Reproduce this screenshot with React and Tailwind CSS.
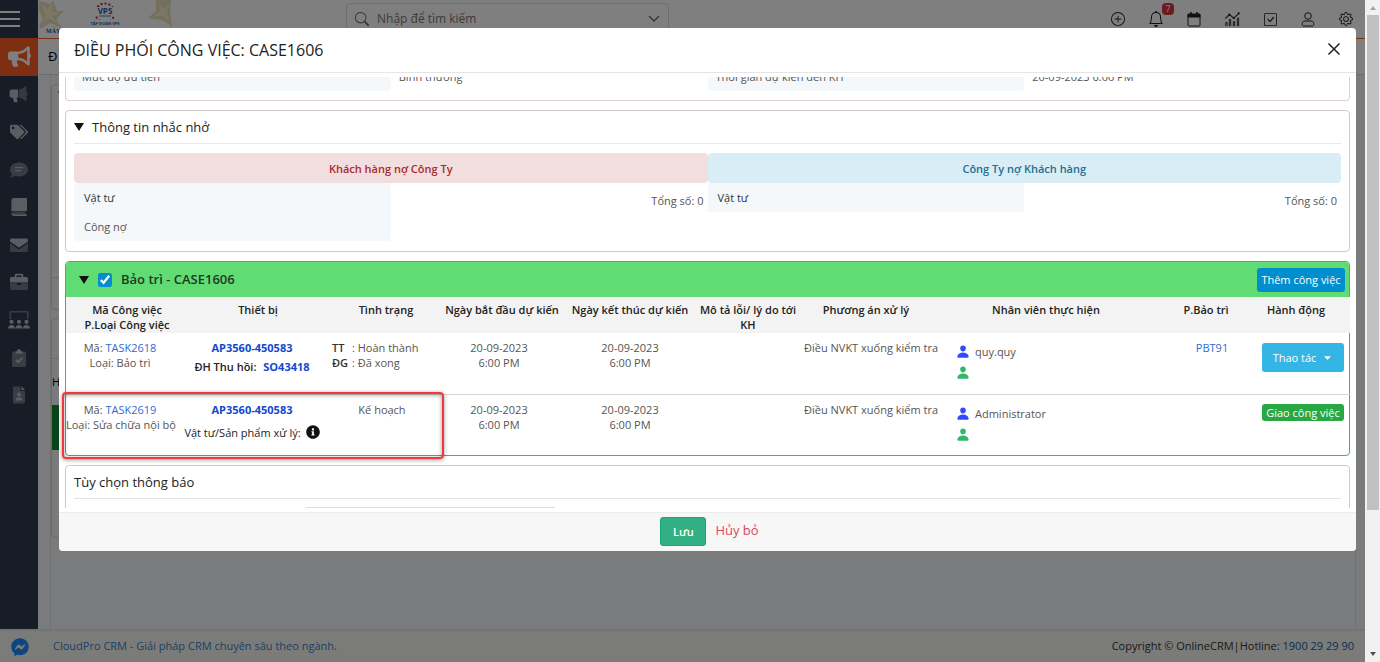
import React from 'react';
import { BsPlusCircle, BsBell, BsCheckSquare, BsGear, BsSearch } from 'react-icons/bs';
import { FaBullhorn, FaTags, FaInfoCircle, FaCaretDown, FaFacebookMessenger } from 'react-icons/fa';
import { IoPerson } from 'react-icons/io5';

/* ---------- Sidebar icons (two-tone) ---------- */
const Megaphone = () => (
    <svg viewBox="0 0 20 18" className="w-5 h-[18px]" fill="currentColor">
        <path d="M2.5 4.500H9v8.200H7.600l.9 3.600c.1.500-.2.900-.7.900H5.600c-.4 0-.7-.2-.8-.6l-1-3.900H2.500C1.400 12.700.6 11.900.6 10.800V6.400c0-1.100.8-1.900 1.900-1.900z" />
        <path opacity=".45" d="M9.800 4.500c2.500-.2 4.700-1.400 6.600-3.200.4-.4 1.100-.1 1.100.5v4.900c1.600.7 1.600 3.200 0 3.900v4.700c0 .6-.7.9-1.100.5-1.900-1.800-4.100-2.900-6.600-3.100z" />
    </svg>
);

const CommentLines = () => (
    <svg viewBox="0 0 20 18" className="w-5 h-[18px]" fill="currentColor">
        <path opacity=".5" d="M10 1.500c5 0 9 3.100 9 7s-4 7-9 7c-1.400 0-2.700-.2-3.900-.7-1.200.9-3 1.700-5.100 1.700 1-1 1.800-2.200 2-3.400C1.700 11.800 1 10.200 1 8.500c0-3.900 4-7 9-7z" />
        <path d="M6 6h8v1.300H6zM6 9h6v1.300H6z" />
    </svg>
);

const Book = () => (
    <svg viewBox="0 0 18 20" className="w-[18px] h-5" fill="currentColor">
        <path d="M4 1h12c.600 0 1 .4 1 1v11c0 .6-.4 1-1 1H4c-1.200 0-2 .4-2.600 1V3.600C1.400 2.100 2.500 1 4 1z" />
        <path opacity=".5" d="M4 14.500h11.500V17H4c-1.600 0-1.600-2.500 0-2.500z" />
        <path d="M1.400 15.800c0 1.900 1.100 3.200 2.600 3.200h12c.6 0 1-.4 1-.9s-.4-.9-1-.9H4c-.9 0-1.500-.6-1.500-1.400z" />
    </svg>
);

const Mail = () => (
    <svg viewBox="0 0 20 18" className="w-5 h-[18px]" fill="currentColor">
        <path opacity=".5" d="M1 7l7.400 5.400c1 .7 2.200.7 3.200 0L19 7v7.300c0 .9-.7 1.700-1.700 1.700H2.700C1.700 16 1 15.200 1 14.300z" />
        <path d="M2.700 2.500h14.600c1 0 1.700.7 1.700 1.600v1.300l-8 5.700c-.6.5-1.400.5-2 0L1 5.400V4.100c0-.9.700-1.600 1.700-1.600z" />
    </svg>
);

const Briefcase = () => (
    <svg viewBox="0 0 20 18" className="w-5 h-[18px]" fill="currentColor">
        <path d="M7.200.8h5.600c.8 0 1.500.7 1.500 1.500V4h3c1 0 1.700.7 1.700 1.700v3.800H1V5.700C1 4.700 1.700 4 2.700 4h3V2.300c0-.8.7-1.500 1.500-1.500zm.3 1.800V4h5V2.600z" />
        <path opacity=".5" d="M1 10.300h7v1.200c0 .3.300.6.6.6h2.800c.3 0 .6-.3.6-.6v-1.200h7v5c0 1-.7 1.700-1.700 1.700H2.700C1.700 17 1 16.300 1 15.300z" />
    </svg>
);

const ScreenUsers = () => (
    <svg viewBox="0 0 24 20" className="w-6 h-5" fill="currentColor">
        <path opacity=".5" d="M2.500 9V2c0-.6.500-1 1-1h17c.5 0 1 .4 1 1v7h-1.500V2.500H4V9z" />
        <circle cx="4.500" cy="11.800" r="2.100" />
        <circle cx="12" cy="11.800" r="2.100" />
        <circle cx="19.500" cy="11.800" r="2.100" />
        <path d="M1 18.500c0-2.200 1.400-3.600 3.500-3.600S8 16.300 8 18.500zM8.500 18.500c0-2.200 1.400-3.600 3.500-3.600s3.500 1.400 3.500 3.600zM16 18.500c0-2.200 1.400-3.600 3.500-3.600s3.500 1.400 3.500 3.600z" />
    </svg>
);

const Clipboard = () => (
    <svg viewBox="0 0 16 20" className="w-4 h-5">
        <path fill="currentColor" opacity=".5" d="M2.500 3.500h11c.8 0 1.500.7 1.500 1.500v12.500c0 .8-.7 1.500-1.500 1.500h-11c-.8 0-1.500-.7-1.500-1.500V5c0-.8.7-1.500 1.500-1.500z" />
        <path fill="currentColor" d="M4.500 3.500h1.300a2.200 2.200 0 0 1 4.400 0h1.300v2.300h-7z" />
        <path fill="none" stroke="currentColor" strokeWidth="1.800" d="M4.800 12l2.300 2.200 4.200-4.200" />
    </svg>
);

const FileUser = () => (
    <svg viewBox="0 0 16 20" className="w-4 h-5" fill="currentColor">
        <path opacity=".5" d="M3 1.500h6.500V6H14v11c0 .8-.7 1.500-1.500 1.500H3.500c-.8 0-1.500-.7-1.500-1.500V2.500c0-.6.400-1 1-1z" />
        <path d="M10.500 1.500L14 5h-3.500z" />
        <circle cx="8" cy="9.500" r="2" />
        <path d="M4.500 15.500c0-2 1.300-3.200 3.500-3.200s3.500 1.200 3.500 3.200z" />
    </svg>
);

const MENU = [
    { name: 'Chiến dịch', icon: Megaphone },
    { name: 'Thẻ', icon: FaTags },
    { name: 'Bình luận', icon: CommentLines },
    { name: 'Tài liệu', icon: Book },
    { name: 'Email', icon: Mail },
    { name: 'Công việc', icon: Briefcase },
    { name: 'Cuộc họp', icon: ScreenUsers },
    { name: 'Kiểm tra', icon: Clipboard },
    { name: 'Hồ sơ', icon: FileUser },
];

/* ---------- Header icons ---------- */
const CalendarIcon = () => (
    <svg viewBox="0 0 16 16" className="w-4 h-4" fill="none" stroke="currentColor">
        <rect x="2" y="3.500" width="12" height="11.500" rx="1" />
        <path d="M2 3h12v3H2z" fill="currentColor" />
        <path d="M5 1v3M11 1v3" strokeWidth="1.500" />
    </svg>
);

const ChartIcon = () => (
    <svg viewBox="0 0 18 18" className="w-4 h-4" fill="none" stroke="currentColor">
        <path d="M1.500 8.500L6 4l5 4 5.500-5" strokeWidth="1.300" />
        <path d="M2 17v-4h1.500v4M6 17V9.500h1.500V17M10.500 17v-5H12v5M15 17V8h1.500v9" />
        <circle cx="6" cy="4" r=".8" fill="currentColor" />
        <circle cx="11" cy="8" r=".8" fill="currentColor" />
        <circle cx="16.500" cy="2.500" r=".8" fill="currentColor" />
    </svg>
);

const UserIcon = () => (
    <svg viewBox="0 0 16 16" className="w-4 h-4" fill="none" stroke="currentColor">
        <circle cx="8" cy="5" r="3.300" />
        <path d="M5 10h6c1.700 0 2.800 1.200 2.800 2.700S13.200 15 12.300 15H3.700c-.9 0-1.500-.8-1.500-2.300S3.300 10 5 10z" />
    </svg>
);

const Banner = () => (
    <svg viewBox="0 0 140 38" className="w-[140px] h-[38px] shrink-0" aria-hidden="true">
        <path fill="#e6deb8" d="M1 1l11 3 3-4 4 11 7 0-8 8 6 9-12-5-9 6-2-3 4-7-4-8z" />
        <path fill="#f6efcf" d="M2 3l8 5 5-6-1 10 10 1-10 3 6 8-9-6-8 7 5-10z" />
        <path fill="#e6deb8" d="M118 0h15l-1 11 2 15-10-6-14-2 8-7z" />
        <path fill="#f6efcf" d="M120 1l5 8 6-5-2 8 3 10-8-6-10 1 8-6z" />
        <circle cx="67" cy="13" r="9.500" fill="none" stroke="#c8233b" strokeWidth="2" strokeDasharray="2 2" />
        <path fill="#fff" d="M55 7h24v9H55z" />
        <text x="67" y="14" textAnchor="middle" fontSize="8" fontWeight="700" fill="#1f62a8">VPS</text>
        <path d="M61 16h12" stroke="#4f87bd" />
        <path fill="#fff" d="M55 20h24v6H55z" />
        <text x="67" y="25" textAnchor="middle" fontSize="4" fontWeight="700" fill="#1f62a8">TẬP ĐOÀN VPS</text>
        <text x="8" y="33" fontSize="6" fontWeight="700" fontFamily="Liberation Serif, serif" fill="#1f4fa0">MÁY</text>
    </svg>
);

const Chevron = () => (
    <svg viewBox="0 0 12 8" className="w-3 h-2" fill="none" stroke="currentColor" strokeWidth="1.300">
        <path d="M1 1l5 5 5-5" />
    </svg>
);

const Triangle = () => (
    <svg viewBox="0 0 10 8" className="w-[10px] h-2 shrink-0" fill="#111">
        <path d="M0 0h10L5 8z" />
    </svg>
);

/* ---------- Page behind the modal ---------- */
const Page = () => (
    <div className="flex flex-col h-full">
        <div className="flex flex-1 min-h-0">
            <aside className="w-[38px] shrink-0 bg-[#2c3b4c]">
                <button aria-label="Menu" className="flex flex-col justify-center gap-[5px] w-5 h-[38px]">
                    <span className="h-[2px] w-full bg-white"></span>
                    <span className="h-[2px] w-full bg-white"></span>
                    <span className="h-[2px] w-full bg-white"></span>
                </button>
                <nav className="flex flex-col h-[376px] text-lg text-[#b4bac2]">
                    <a href="#marketing" aria-label="Marketing" className="flex flex-1 items-center justify-center bg-[#fe5f22] text-white text-[23px]">
                        <FaBullhorn />
                    </a>
                    {MENU.map((item) => (
                        <a key={item.name} href="#menu" aria-label={item.name} className="flex flex-1 items-center justify-center">
                            <item.icon />
                        </a>
                    ))}
                </nav>
            </aside>

            <div className="flex-1 min-w-0 flex flex-col bg-[#f5f7fa]">
                <header className="h-[39px] flex bg-white border-b border-[#fe5f22]">
                    <Banner />
                    <div className="flex-1 flex">
                        <div className="ml-[168px] mt-[3px] w-[323px] h-8 flex items-center gap-2 px-2 rounded border border-[#dcdcdc] text-[#666]">
                            <BsSearch className="w-[14px] h-[14px]" />
                            <input aria-label="Tìm kiếm" placeholder="Nhập để tìm kiếm" className="flex-1 min-w-0 text-xs bg-transparent placeholder:text-[#777]" />
                            <Chevron />
                        </div>
                    </div>
                    <div className="flex items-center gap-[22px] pr-[11px] text-base text-[#222]">
                        <button aria-label="Thêm" className="w-4 flex justify-center"><BsPlusCircle className="w-[14px] h-[14px]" /></button>
                        <button aria-label="Thông báo" className="relative">
                            <BsBell />
                            <span className="absolute -top-2 left-[14px] w-3 h-3 rounded-sm bg-[#dc3545] text-white text-[9px] leading-3 text-center">7</span>
                        </button>
                        <button aria-label="Lịch"><CalendarIcon /></button>
                        <button aria-label="Báo cáo"><ChartIcon /></button>
                        <button aria-label="Công việc" className="w-4 flex justify-center"><BsCheckSquare className="w-[13px] h-[13px]" /></button>
                        <button aria-label="Tài khoản"><UserIcon /></button>
                        <button aria-label="Cài đặt" className="w-4 flex justify-center"><BsGear className="w-[14px] h-[14px]" /></button>
                    </div>
                </header>
                <div className="h-9 flex items-center px-[10px] bg-white border-b border-[#ddd] text-[13px] font-medium">Đ</div>
                <div className="flex-1 flex flex-col gap-2 ml-3 mr-[9px] pt-[9px] border-x border-[#e4e4e4]">
                    <div className="h-[226px] flex flex-col rounded border border-[#d5d5d5] px-[6px]">
                        <span className="flex-1 text-[#b00020] text-xs">▾</span>
                        <div className="h-8 -mx-[6px] border-t border-[#d5d5d5]"></div>
                    </div>
                    <div className="h-[220px] flex flex-col rounded border border-[#d5d5d5]">
                        <div className="h-10 border-b border-[#ddd]"></div>
                        <div className="h-[46px] flex items-center text-[11px]">H</div>
                        <div className="h-[45px] bg-[#0f8a2c]"></div>
                    </div>
                </div>
            </div>
        </div>

        <footer className="h-[33px] shrink-0 flex items-center justify-between border-t-2 border-[#e6e8e8] bg-[#f6f8f5] px-[11px] text-[11px] text-[#333]">
            <div className="flex items-center gap-6">
                <FaFacebookMessenger className="w-[18px] h-[18px] text-[#1a8cff]" />
                <a href="#cloudpro" className="text-[#3b7fc0]">CloudPro CRM - Giải pháp CRM chuyên sâu theo ngành.</a>
            </div>
            <p>
                Copyright © OnlineCRM|Hotline: <a href="tel:1900292990" className="text-[#0f5ca8]">1900 29 29 90</a>
            </p>
        </footer>
    </div>
);

/* ---------- Modal parts ---------- */
const Field = ({ label, value }) => (
    <div className="grid grid-cols-2 h-[29px] items-center">
        <span className="h-full flex items-center pl-2 rounded-b bg-[#f4f8fb]">{label}</span>
        <span className="pl-2">{value}</span>
    </div>
);

const COLUMNS = [
    { title: 'Mã Công việc', sub: 'P.Loại Công việc', width: 'w-[108px]', pad: 'pl-[14px]' },
    { title: 'Thiết bị', width: 'w-[156px]', pad: 'pl-3' },
    { title: 'Tình trạng', width: 'w-[104px]', pad: 'pl-2' },
    { title: 'Ngày bắt đầu dự kiến', width: 'w-[130px]', pad: 'pl-[6px]' },
    { title: 'Ngày kết thúc dự kiến', width: 'w-[132px]', pad: '' },
    { title: 'Mô tả lỗi/ lý do tới', sub: 'KH', width: 'w-[108px]', pad: 'pr-1' },
    { title: 'Phương án xử lý', width: 'w-[128px]', pad: 'pr-1' },
    { title: 'Nhân viên thực hiện', width: 'w-[236px]', pad: 'pr-2' },
    { title: 'P.Bảo trì', width: 'w-[88px]', pad: 'pr-3' },
    { title: 'Hành động', width: 'w-[94px]', pad: 'pr-[14px]' },
];

const TASKS = [
    { code: 'TASK2618', type: 'Bảo trì', device: 'AP3560-450583', order: 'SO43418', user: 'quy.quy', ticket: 'PBT91', done: true },
    { code: 'TASK2619', type: 'Sửa chữa nội bộ', device: 'AP3560-450583', user: 'Administrator' },
];

const TaskRow = ({ task }) => (
    <tr className="h-[61px] align-top border-b border-[#ddd3d6] last:border-b-0 whitespace-nowrap [&>td]:pt-[7px]">
        <td>
            Mã: <a href="#task" className="text-[#3567d6]">{task.code}</a>
            <br />
            Loại: {task.type}
        </td>
        <td className="text-[#222]">
            <a href="#device" className="font-bold text-[#1148d0]">{task.device}</a>
            {task.order ? (
                <p className="mt-1 font-semibold">
                    ĐH Thu hồi: <a href="#order" className="ml-1 font-bold text-[#1148d0]">{task.order}</a>
                </p>
            ) : (
                <p className="mt-2 flex items-center justify-center gap-[5px]">
                    Vật tư/Sản phẩm xử lý: <FaInfoCircle className="w-[14px] h-[14px] text-[#111]" />
                </p>
            )}
        </td>
        <td>
            {task.done ? (
                <div className="grid grid-cols-[20px_1fr] pl-[2px] text-left">
                    <span className="font-semibold text-[#333]">TT</span><span>: Hoàn thành</span>
                    <span className="font-semibold text-[#333]">ĐG</span><span>: Đã xong</span>
                </div>
            ) : 'Kế hoạch'}
        </td>
        <td>20-09-2023<br />6:00 PM</td>
        <td>20-09-2023<br />6:00 PM</td>
        <td></td>
        <td>Điều NVKT xuống kiểm tra</td>
        <td className="text-left">
            <div className="flex flex-col gap-[6px] pl-6 pt-1">
                <span className="flex items-center gap-[5px]"><IoPerson className="w-[14px] h-[15px] text-[#2f4bff]" />{task.user}</span>
                <IoPerson className="w-[14px] h-[15px] text-[#2fb86a]" />
            </div>
        </td>
        <td><a href="#ticket" className="text-[#3567d6]">{task.ticket}</a></td>
        <td>
            {task.done ? (
                <button className="mt-[3px] w-[82px] h-[29px] inline-flex items-center justify-center gap-[6px] rounded-[3px] bg-[#33b5e5] text-white">
                    Thao tác <FaCaretDown />
                </button>
            ) : (
                <button className="mt-[2px] w-[82px] h-[17px] rounded-[3px] bg-[#28a745] text-white">Giao công việc</button>
            )}
        </td>
    </tr>
);

const DispatchModal = () => (
    <div role="dialog" aria-labelledby="dispatch-title" className="ml-[59px] mr-[9px] mt-7 rounded bg-white overflow-hidden text-[11px] leading-[15px] text-[#555]">
        <div className="h-[45px] flex items-center justify-between px-[15px] border-b border-[#e5e5e5] text-[#222]">
            <h4 id="dispatch-title" className="text-base">ĐIỀU PHỐI CÔNG VIỆC: CASE1606</h4>
            <button aria-label="Đóng" className="pb-[3px]">
                <svg viewBox="0 0 14 14" className="w-[14px] h-[14px]" stroke="currentColor" strokeWidth="1.500">
                    <path d="M1.500 1.500l11 11M12.500 1.500l-11 11" />
                </svg>
            </button>
        </div>

        <div className="my-1 h-[431px] overflow-hidden flex flex-col gap-[9px] px-[6px]">
            <section className="-mt-[15px] shrink-0 grid grid-cols-2 px-2 pb-[9px] rounded-b border border-t-0 border-[#dccfd3]">
                <Field label="Mức độ ưu tiên" value="Bình thường" />
                <Field label="Thời gian dự kiến đến KH" value="20-09-2023 6:00 PM" />
            </section>

            <section className="shrink-0 px-2 pb-[10px] rounded border border-[#d3c8cc]">
                <h5 className="h-[33px] flex items-center gap-2 border-b border-[#e9e9e9] mb-[9px] text-[13px] font-medium text-[#222]">
                    <Triangle /> Thông tin nhắc nhở
                </h5>
                <div className="grid grid-cols-2">
                    <div>
                        <p className="h-[30px] flex items-center justify-center rounded bg-[#f2dede] font-semibold text-[#a92b2b]">Khách hàng nợ Công Ty</p>
                        <div className="grid grid-cols-2">
                            <div className="rounded bg-[#f4f8fb] pl-[10px]">
                                <p className="h-[29px] flex items-center text-[#333]">Vật tư</p>
                                <p className="h-[29px] flex items-center">Công nợ</p>
                            </div>
                            <p className="pt-[10px] pr-1 text-right">Tổng số: 0</p>
                        </div>
                    </div>
                    <div>
                        <p className="h-[30px] flex items-center justify-center rounded bg-[#d9edf7] font-semibold text-[#24708f]">Công Ty nợ Khách hàng</p>
                        <div className="grid grid-cols-2 items-start">
                            <p className="h-[29px] flex items-center bg-[#f4f8fb] pl-[10px] text-[#333]">Vật tư</p>
                            <p className="pt-[10px] pr-1 text-right">Tổng số: 0</p>
                        </div>
                    </div>
                </div>
            </section>

            <section className="relative shrink-0 rounded border border-[#4fae62]">
                <div className="h-[35px] flex items-center pl-[13px] pr-1 rounded-t bg-[#61dc75]">
                    <Triangle />
                    <label className="ml-[9px] flex items-center gap-[9px] text-[13px] font-semibold text-[#1d3a22]">
                        <input type="checkbox" defaultChecked className="w-[14px] h-[14px] accent-[#008ecf]" />
                        Bảo trì - CASE1606
                    </label>
                    <button className="ml-auto h-6 w-[88px] rounded-[3px] bg-[#008ecf] text-white">Thêm công việc</button>
                </div>
                <table className="w-full table-fixed text-center">
                    <thead>
                        <tr className="h-9 align-top bg-[#f3f3f3] text-[#222] whitespace-nowrap">
                            {COLUMNS.map((col) => (
                                <th key={col.title} className={`${col.width} ${col.pad} pt-[5px] font-semibold`}>
                                    {col.title}
                                    {col.sub && <span className="block">{col.sub}</span>}
                                </th>
                            ))}
                        </tr>
                    </thead>
                    <tbody>
                        {TASKS.map((task) => <TaskRow key={task.code} task={task} />)}
                    </tbody>
                </table>
                {/* Highlight around the internal repair task */}
                <div className="absolute -left-1 -bottom-1 w-[382px] h-[67px] rounded border-2 border-[#f03a3a] shadow-[0_1px_4px_rgba(0,0,0,0.4),inset_0_1px_4px_rgba(0,0,0,0.4)] pointer-events-none"></div>
            </section>

            <section className="shrink-0 px-2 pb-[9px] rounded border border-[#d3c8cc]">
                <h5 className="h-[33px] flex items-center border-b border-[#e3e3e3] mb-2 text-[13px] font-medium text-[#222]">Tùy chọn thông báo</h5>
                <input aria-label="Tùy chọn thông báo" className="block ml-[232px] w-[249px] h-7 border border-[#ddd]" />
            </section>
        </div>

        <div className="h-[39px] flex items-start justify-center gap-[9px] pt-1 pl-1 border-t border-[#ececec] bg-[#f7f7f7]">
            <button className="w-[46px] h-[29px] rounded-[3px] bg-[#31b083] border border-[#17a673] font-semibold text-white">Lưu</button>
            <a href="#cancel" className="pt-[6px] text-[13px] text-[#dd4560]">Hủy bỏ</a>
        </div>
    </div>
);

export default function App() {
    return (
        <div className="flex h-screen overflow-hidden font-['Open_Sans','Noto_Sans',sans-serif]">
            <div className="relative flex-1 min-w-0">
                <Page />
                <div className="absolute inset-0 bg-black/50">
                    <DispatchModal />
                </div>
            </div>
            {/* Window scrollbar */}
            <div className="w-[15px] shrink-0 flex flex-col items-center justify-between bg-[#f1f1f1] text-[#555]">
                <div className="w-full flex flex-col items-center">
                    <span className="h-[15px] flex items-center"><svg viewBox="0 0 6 4" className="w-[6px] h-1" fill="#a3a3a3"><path d="M0 4h6L3 0z" /></svg></span>
                    <div className="w-3 h-[495px] bg-[#c1c1c1]"></div>
                </div>
                <span className="h-[17px] flex items-center"><svg viewBox="0 0 6 4" className="w-[6px] h-1" fill="#505050"><path d="M0 0h6L3 4z" /></svg></span>
            </div>
        </div>
    );
}
